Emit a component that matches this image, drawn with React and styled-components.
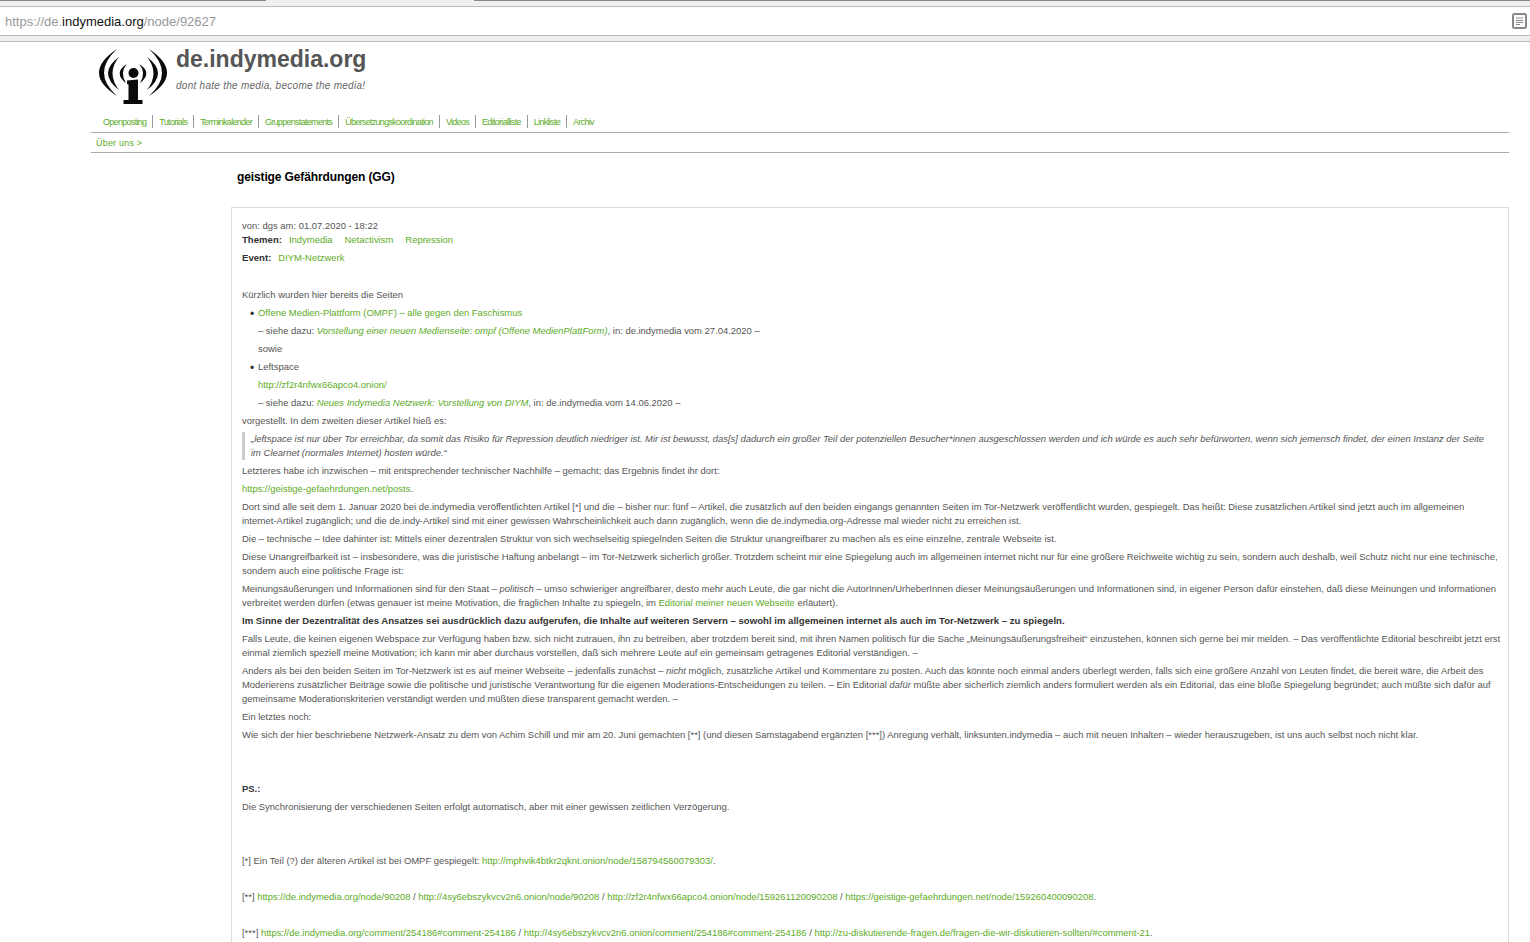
import React from 'react';
import styled, { createGlobalStyle } from 'styled-components';

const GlobalStyle = createGlobalStyle`
  html, body {
    margin: 0;
    height: 942px;
    overflow: hidden;
    background: #fff;
    font-family: "Liberation Sans", Arial, sans-serif;
  }
`;

const navItems = [
  'Openposting',
  'Tutorials',
  'Terminkalender',
  'Gruppenstatements',
  'Übersetzungskoordination',
  'Videos',
  'Editorialliste',
  'Linkliste',
  'Archiv',
];

const LogoIcon = () => {
  const arcs = [
    'M19 2Q-17 26 19 49Q-7 26 19 2Z',
    'M21 10Q-1 26 21 43Q8 26 21 10Z',
    'M28.7 17Q15 26 28 36Q21.5 26 28.7 17Z',
  ];
  return (
    <svg width="70" height="58" viewBox="0 0 70 58">
      {arcs.map(d => (
        <React.Fragment key={d}>
          <path d={d} fill="#0a0a0a" />
          <path d={d} fill="#0a0a0a" transform="matrix(-1 0 0 1 70 0)" />
        </React.Fragment>
      ))}
      <circle cx="35.5" cy="26" r="5" fill="#0a0a0a" />
      <path
        d="M29 33.5L40 32.5V53H44.5V57H25.5V53H30.5V37.5L29 37Z"
        fill="#0a0a0a"
      />
    </svg>
  );
};

const ReaderIcon = () => (
  <svg width="15" height="16" viewBox="0 0 15 16">
    <rect x="1" y="1" width="13" height="14" rx="1.5" fill="#fff" stroke="#888" strokeWidth="2" />
    <path d="M4 5H11M4 7.5H11M4 9.5H11M4 11.5H8" stroke="#888" strokeWidth="1" fill="none" />
  </svg>
);

const App = () => (
  <>
    <GlobalStyle />
    <TabStrip>
      <TabLine $width="266px" />
      <ActiveTab />
      <TabLine />
    </TabStrip>
    <UrlBar>
      <Url>
        https://de.<Host>indymedia.org</Host>/node/92627
      </Url>
      <ReaderIcon />
    </UrlBar>
    <FindBar />
    <Page>
      <Brand>
        <LogoIcon />
        <BrandText>
          <SiteName>de.indymedia.org</SiteName>
          <Slogan>dont hate the media, become the media!</Slogan>
        </BrandText>
      </Brand>
      <Nav>
        {navItems.map(item => (
          <NavItem key={item}>{item}</NavItem>
        ))}
      </Nav>
      <SubNav>Über uns &gt;</SubNav>
      <Title>geistige Gefährdungen (GG)</Title>
      <Card>
        <Meta>von: dgs am: 01.07.2020 - 18:22</Meta>
        <Meta>
          <Label>Themen:</Label>
          <TagLink>Indymedia</TagLink>
          <TagLink>Netactivism</TagLink>
          <TagLink>Repression</TagLink>
        </Meta>
        <EventRow>
          <Label>Event:</Label>
          <TagLink>DIYM-Netzwerk</TagLink>
        </EventRow>
        <Para>Kürzlich wurden hier bereits die Seiten</Para>
        <List>
          <li>
            <Link>Offene Medien-Plattform (OMPF) – alle gegen den Faschismus</Link>
            <Para>
              – siehe dazu: <Link><em>Vorstellung einer neuen Medienseite: ompf (Offene MedienPlattForm)</em></Link>, in: de.indymedia vom 27.04.2020 –
            </Para>
            <Para>sowie</Para>
          </li>
          <li>
            Leftspace
            <Para><Link>http://zf2r4nfwx66apco4.onion/</Link></Para>
            <Para>
              – siehe dazu: <Link><em>Neues Indymedia Netzwerk: Vorstellung von DIYM</em></Link>, in: de.indymedia vom 14.06.2020 –
            </Para>
          </li>
        </List>
        <Para>vorgestellt. In dem zweiten dieser Artikel hieß es:</Para>
        <Quote>
          „leftspace ist nur über Tor erreichbar, da somit das Risiko für Repression deutlich niedriger ist. Mir ist bewusst, das[s] dadurch ein großer Teil der potenziellen Besucher*innen ausgeschlossen werden und ich würde es auch sehr befürworten, wenn sich jemensch findet, der einen Instanz der Seite im Clearnet (normales Internet) hosten würde.“
        </Quote>
        <Para>Letzteres habe ich inzwischen – mit entsprechender technischer Nachhilfe – gemacht; das Ergebnis findet ihr dort:</Para>
        <Para><Link>https://geistige-gefaehrdungen.net/posts</Link>.</Para>
        <Para>Dort sind alle seit dem 1. Januar 2020 bei de.indymedia veröffentlichten Artikel [*] und die – bisher nur: fünf – Artikel, die zusätzlich auf den beiden eingangs genannten Seiten im Tor-Netzwerk veröffentlicht wurden, gespiegelt. Das heißt: Diese zusätzlichen Artikel sind jetzt auch im allgemeinen <NoBreak>internet-Artikel</NoBreak> zugänglich; und die de.indy-Artikel sind mit einer gewissen Wahrscheinlichkeit auch dann zugänglich, wenn die de.indymedia.org-Adresse mal wieder nicht zu erreichen ist.</Para>
        <Para>Die – technische – Idee dahinter ist: Mittels einer dezentralen Struktur von sich wechselseitig spiegelnden Seiten die Struktur unangreifbarer zu machen als es eine einzelne, zentrale Webseite ist.</Para>
        <Para>Diese Unangreifbarkeit ist – insbesondere, was die juristische Haftung anbelangt – im Tor-Netzwerk sicherlich größer. Trotzdem scheint mir eine Spiegelung auch im allgemeinen internet nicht nur für eine größere Reichweite wichtig zu sein, sondern auch deshalb, weil Schutz nicht nur eine technische, sondern auch eine politische Frage ist:</Para>
        <Para>Meinungsäußerungen und Informationen sind für den Staat – <em>politisch</em> – umso schwieriger angreifbarer, desto mehr auch Leute, die gar nicht die AutorInnen/UrheberInnen dieser Meinungsäußerungen und Informationen sind, in eigener Person dafür einstehen, daß diese Meinungen und Informationen verbreitet werden dürfen (etwas genauer ist meine Motivation, die fraglichen Inhalte zu spiegeln, im <Link>Editorial meiner neuen Webseite</Link> erläutert).</Para>
        <Para><Lead>Im Sinne der Dezentralität des Ansatzes sei ausdrücklich dazu aufgerufen, die Inhalte auf weiteren Servern – sowohl im allgemeinen internet als auch im Tor-Netzwerk – zu spiegeln.</Lead></Para>
        <Para>Falls Leute, die keinen eigenen Webspace zur Verfügung haben bzw. sich nicht zutrauen, ihn zu betreiben, aber trotzdem bereit sind, mit ihren Namen politisch für die Sache „Meinungsäußerungsfreiheit“ einzustehen, können sich gerne bei mir melden. – Das veröffentlichte Editorial beschreibt jetzt erst einmal ziemlich speziell meine Motivation; ich kann mir aber durchaus vorstellen, daß sich mehrere Leute auf ein gemeinsam getragenes Editorial verständigen. –</Para>
        <Para>Anders als bei den beiden Seiten im Tor-Netzwerk ist es auf meiner Webseite – jedenfalls zunächst – <em>nicht</em> möglich, zusätzliche Artikel und Kommentare zu posten. Auch das könnte noch einmal anders überlegt werden, falls sich eine größere Anzahl von Leuten findet, die bereit wäre, die Arbeit des Moderierens zusätzlicher Beiträge sowie die politische und juristische Verantwortung für die eigenen Moderations-Entscheidungen zu teilen. – Ein Editorial <em>dafür</em> müßte aber sicherlich ziemlich anders formuliert werden als ein Editorial, das eine bloße Spiegelung begründet; auch müßte sich dafür auf gemeinsame Moderationskriterien verständigt werden und müßten diese transparent gemacht werden. –</Para>
        <Para>Ein letztes noch:</Para>
        <Para>Wie sich der hier beschriebene Netzwerk-Ansatz zu dem von Achim Schill und mir am 20. Juni gemachten [**] (und diesen Samstagabend ergänzten [***]) Anregung verhält, linksunten.indymedia – auch mit neuen Inhalten – wieder herauszugeben, ist uns auch selbst noch nicht klar.</Para>
        <PsHead>PS.:</PsHead>
        <Para>Die Synchronisierung der verschiedenen Seiten erfolgt automatisch, aber mit einer gewissen zeitlichen Verzögerung.</Para>
        <Footnote $first>[*] Ein Teil (?) der älteren Artikel ist bei OMPF gespiegelt: <Link>http://mphvik4btkr2qknt.onion/node/158794560079303/</Link>.</Footnote>
        <Footnote>[**] <Link>https://de.indymedia.org/node/90208</Link> / <Link>http://4sy6ebszykvcv2n6.onion/node/90208</Link> / <Link>http://zf2r4nfwx66apco4.onion/node/159261120090208</Link> / <Link>https://geistige-gefaehrdungen.net/node/159260400090208</Link>.</Footnote>
        <Footnote>[***] <Link>https://de.indymedia.org/comment/254186#comment-254186</Link> / <Link>http://4sy6ebszykvcv2n6.onion/comment/254186#comment-254186</Link> / <Link>http://zu-diskutierende-fragen.de/fragen-die-wir-diskutieren-sollten/#comment-21</Link>.</Footnote>
      </Card>
    </Page>
  </>
);

const TabStrip = styled.div`
  display: flex;
  height: 6px;
  background: #f0f0f0;
  border-bottom: 1px solid #bbb;
`;
const TabLine = styled.div`
  flex: ${({ $width }) => ($width ? `0 0 ${$width}` : '1')};
  border-top: 1px solid #888;
`;
const ActiveTab = styled.div`
  width: 208px;
`;
const UrlBar = styled.div`
  display: flex;
  align-items: center;
  justify-content: space-between;
  height: 28px;
  padding: 0 3px 0 5px;
  background: #fff;
  border-bottom: 1px solid #bbb;
`;
const Url = styled.div`
  font-size: 13px;
  color: #999;
`;
const Host = styled.span`
  color: #111;
`;
const FindBar = styled.div`
  height: 5px;
  background: #eee;
  border-bottom: 1px solid #bbb;
`;
const Page = styled.div`
  padding: 0 21px 0 91px;
`;
const Brand = styled.div`
  display: flex;
  gap: 8px;
  height: 65px;
  padding: 5px 0 0 7px;
`;
const BrandText = styled.div`
  display: flex;
  flex-direction: column;
`;
const SiteName = styled.div`
  font-size: 23px;
  font-weight: bold;
  line-height: 24px;
  color: #555;
`;
const Slogan = styled.div`
  margin-top: 9px;
  font-size: 10px;
  font-style: italic;
  line-height: 12px;
  letter-spacing: 0.27px;
  color: #666;
`;
const Nav = styled.div`
  display: flex;
  height: 21px;
  padding: 3px 0 0 6px;
  box-sizing: border-box;
  border-bottom: 1px solid #aaa;
`;
const NavItem = styled.div`
  height: 13px;
  padding: 0 6px;
  font-size: 9px;
  line-height: 15px;
  letter-spacing: -0.7px;
  color: #5dab1f;
  & + & {
    border-left: 1px solid #999;
  }
`;
const SubNav = styled.div`
  height: 19px;
  padding-left: 5px;
  font-size: 9px;
  line-height: 20px;
  letter-spacing: 0.2px;
  color: #5dab1f;
  border-bottom: 1px solid #aaa;
`;
const Title = styled.h1`
  margin: 0;
  height: 54px;
  padding-left: 146px;
  font-size: 12px;
  line-height: 49px;
  letter-spacing: -0.12px;
  color: #000;
`;
const Card = styled.div`
  margin-left: 140px;
  padding: 11px 6px 40px 10px;
  border: 1px solid #ddd;
  font-size: 9.45px;
  line-height: 14px;
  color: #555;
`;
const Meta = styled.div`
  height: 14px;
`;
const EventRow = styled.div`
  height: 14px;
  margin: 4px 0 23px;
`;
const Label = styled.strong`
  margin-right: 7px;
  font-size: 9.6px;
  color: #333;
`;
const TagLink = styled.span`
  margin-right: 12px;
  color: #5dab1f;
`;
const Link = styled.span`
  color: #5dab1f;
`;
const NoBreak = styled.span`
  white-space: nowrap;
`;
const Lead = styled.strong`
  font-size: 9.6px;
  color: #333;
`;
const Para = styled.p`
  margin: 4px 0;
`;
const List = styled.ul`
  margin: 4px 0;
  padding-left: 16px;
  list-style: none;
  li::before {
    content: '•';
    display: inline-block;
    width: 8px;
    margin-left: -8px;
    font-size: 12px;
    line-height: 12px;
    vertical-align: -2px;
    color: #333;
  }
`;
const Quote = styled.blockquote`
  margin: 4px 0;
  padding: 0 11px 0 6px;
  border-left: 3px solid #ccc;
  font-style: italic;
`;
const PsHead = styled.div`
  margin-top: 40px;
  font-weight: bold;
  color: #333;
`;
const Footnote = styled.p`
  margin: ${({ $first }) => ($first ? '40px' : '22px')} 0 0;
`;

export default App;
